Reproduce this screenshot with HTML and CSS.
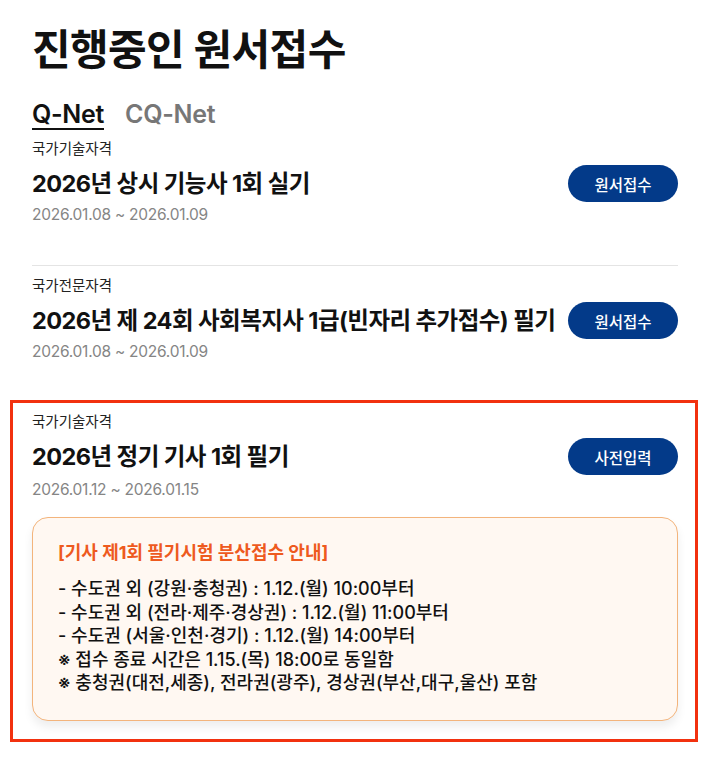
FILE: index.html
```html
<!DOCTYPE html>
<html lang="ko">
<head>
<meta charset="utf-8">
<title>진행중인 원서접수</title>
<link rel="stylesheet" href="styles.css">
</head>
<body>
<main class="page">
  <h1 class="page-title">진행중인 원서접수</h1>
  <nav class="tabs">
    <a class="tab tab-active">Q-Net</a>
    <a class="tab">CQ-Net</a>
  </nav>
  <ul class="exam-list">
    <li class="exam exam-divided">
      <div class="exam-cat">국가기술자격</div>
      <div class="exam-row">
        <h2 class="exam-title">2026년 상시 기능사 1회 실기</h2>
        <button class="exam-btn">원서접수</button>
      </div>
      <div class="exam-date">2026.01.08 ~ 2026.01.09</div>
    </li>
    <li class="exam exam-second">
      <div class="exam-cat">국가전문자격</div>
      <div class="exam-row">
        <h2 class="exam-title">2026년 제 24회 사회복지사 1급(빈자리 추가접수) 필기</h2>
        <button class="exam-btn">원서접수</button>
      </div>
      <div class="exam-date">2026.01.08 ~ 2026.01.09</div>
    </li>
    <li class="exam exam-highlight">
      <div class="exam-cat">국가기술자격</div>
      <div class="exam-row">
        <h2 class="exam-title">2026년 정기 기사 1회 필기</h2>
        <button class="exam-btn">사전입력</button>
      </div>
      <div class="exam-date exam-date-gap">2026.01.12 ~ 2026.01.15</div>
      <div class="notice">
        <p class="notice-head">[기사 제1회 필기시험 분산접수 안내]</p>
        <p class="notice-line">- 수도권 외 (강원·충청권) : 1.12.(월) 10:00부터</p>
        <p class="notice-line">- 수도권 외 (전라·제주·경상권) : 1.12.(월) 11:00부터</p>
        <p class="notice-line">- 수도권 (서울·인천·경기) : 1.12.(월) 14:00부터</p>
        <p class="notice-line">※ 접수 종료 시간은 1.15.(목) 18:00로 동일함</p>
        <p class="notice-line">※ 충청권(대전,세종), 전라권(광주), 경상권(부산,대구,울산) 포함</p>
      </div>
    </li>
  </ul>
</main>
</body>
</html>
```

FILE: styles.css
```css
* { box-sizing: border-box; }
html, body {
  margin: 0;
  padding: 0;
  background: #ffffff;
}
body {
  font-family: "Inter", "Noto Sans CJK KR", sans-serif;
  color: #111111;
}
.page {
  padding: 21px 29px 0 32px;
}
.page-title {
  margin: 0;
  font-size: 42px;
  line-height: 57px;
  font-weight: 700;
  letter-spacing: -0.6px;
  color: #111;
}
.tabs {
  display: flex;
  gap: 21px;
  margin-top: 22px;
  height: 30px;
}
.tab {
  font-size: 25px;
  line-height: 28px;
  font-weight: 600;
  color: #777777;
  letter-spacing: -0.3px;
}
.tab-active {
  color: #111111;
  border-bottom: 2px solid #111111;
}
.exam-list {
  list-style: none;
  margin: 9px 0 0 0;
  padding: 0;
}
.exam {
  display: flex;
  flex-direction: column;
}
.exam-divided {
  padding-bottom: 40px;
  border-bottom: 1px solid #e4e4e4;
}
.exam-second {
  padding-top: 10px;
  padding-bottom: 38px;
}
.exam-cat {
  font-size: 14.5px;
  line-height: 20px;
  color: #222;
}
.exam-row {
  display: flex;
  align-items: center;
  justify-content: space-between;
  margin-top: 6px;
}
.exam-title {
  margin: 0;
  font-size: 23.5px;
  line-height: 30px;
  font-weight: 700;
  letter-spacing: -0.55px;
  color: #111;
}
.exam-btn {
  flex: none;
  width: 110px;
  height: 37px;
  border: none;
  border-radius: 19px;
  background: #033a89;
  color: #ffffff;
  font-family: "Inter", "Noto Sans CJK KR", sans-serif;
  font-size: 15.5px;
  font-weight: 500;
}
.exam-date {
  margin-top: 3px;
  font-size: 15.5px;
  line-height: 20px;
  color: #858585;
  letter-spacing: -0.25px;
}
.exam-date-gap {
  margin-top: 5px;
}
.exam-highlight {
  margin: 0 -20px 0 -22px;
  padding: 9px 17px 18px 19px;
  border: 3px solid #f2310f;
}
.notice {
  margin-top: 17px;
  padding: 22px 25px 25px 25px;
  border: 1px solid #f3b47c;
  border-radius: 16px;
  background: #fff8f2;
  box-shadow: 0 6px 10px rgba(0, 0, 0, 0.07);
}
.notice p {
  margin: 0;
}
.notice-head {
  font-size: 18px;
  line-height: 25px;
  font-weight: 700;
  color: #ee5a1e;
  letter-spacing: 0;
  margin-bottom: 12px !important;
}
.notice-line {
  font-size: 18px;
  line-height: 23.5px;
  font-weight: 500;
  color: #111;
  letter-spacing: 0;
}
```
